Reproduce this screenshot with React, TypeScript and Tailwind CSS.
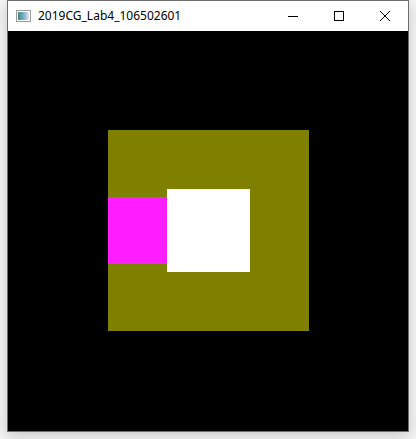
export default function App() {
  return (
    <div className="w-[416px] h-[439px] bg-[#f4f4f4] overflow-hidden">
      <div className="ml-[7px] w-[402px] border border-[#6e6e6e] shadow-[0_4px_14px_rgba(0,0,0,0.18)] bg-white">
        {/* title bar */}
        <div className="h-[30px] flex items-center bg-white">
          <WinIcon />
          <span className="ml-[6px] text-[12px] text-black leading-none" style={{ fontFamily: '"Noto Sans", "Liberation Sans", sans-serif' }}>
            2019CG_Lab4_106502601
          </span>
          <div className="ml-auto flex h-full">
            <div className="w-[46px] flex items-center justify-center">
              <svg width="10" height="10" viewBox="0 0 10 10"><line x1="0" y1="5.5" x2="10" y2="5.5" stroke="#000" strokeWidth="1" /></svg>
            </div>
            <div className="w-[46px] flex items-center justify-center">
              <svg width="10" height="10" viewBox="0 0 10 10"><rect x="0.5" y="0.5" width="9" height="9" fill="none" stroke="#000" strokeWidth="1" /></svg>
            </div>
            <div className="w-[46px] flex items-center justify-center">
              <svg width="10" height="10" viewBox="0 0 10 10"><path d="M0 0L10 10M10 0L0 10" stroke="#000" strokeWidth="1" /></svg>
            </div>
          </div>
        </div>
        {/* GL client area */}
        <svg width="400" height="400" viewBox="0 0 400 400" className="block bg-black">
          <rect x="100" y="99" width="201" height="201" fill="#808000" />
          <rect x="100" y="166" width="59" height="67" fill="#ff1eff" />
          <rect x="159" y="158" width="83" height="83" fill="#ffffff" />
        </svg>
      </div>
    </div>
  );
}

function WinIcon() {
  return (
    <svg width="16" height="16" viewBox="0 0 16 16" className="ml-[8px]">
      <defs>
        <linearGradient id="g" x1="0" y1="0" x2="1" y2="0">
          <stop offset="0" stopColor="#3a8a8a" />
          <stop offset="0.6" stopColor="#8fb8c8" />
          <stop offset="1" stopColor="#e0e8f0" />
        </linearGradient>
      </defs>
      <rect x="0.5" y="2.5" width="14" height="11" fill="#fff" stroke="#9a9a9a" />
      <rect x="2" y="4" width="11" height="8" fill="url(#g)" />
    </svg>
  );
}
